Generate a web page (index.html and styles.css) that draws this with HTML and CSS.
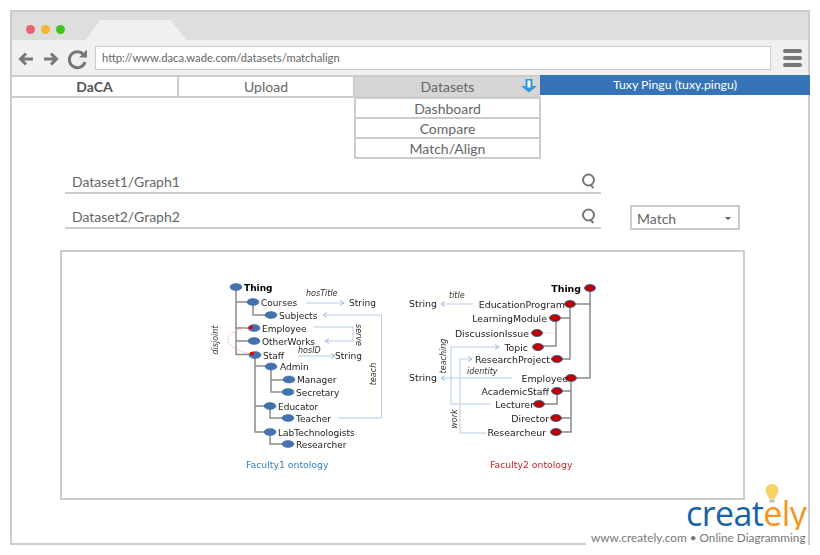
FILE: index.html
```html
<!DOCTYPE html>
<html lang="en">
<head>
  <meta charset="UTF-8" />
  <title>DaCA - Match/Align</title>
  <link rel="stylesheet" href="styles.css">
</head>
<body>
  <div class="window">
    <!-- Browser chrome -->
    <div class="titlebar">
      <span class="dot dot-red"></span>
      <span class="dot dot-yellow"></span>
      <span class="dot dot-green"></span>
      <span class="tab"></span>
    </div>
    <div class="toolbar">
      <svg class="tool-icons" width="72" height="24" viewBox="0 0 72 24">
        <path d="M16 12H4M9 6.500L3.500 12L9 17.500" class="tool-stroke" />
        <path d="M27 12H39.500M34 6.500L39.500 12L34 17.500" class="tool-stroke" />
        <path d="M66.500 7.500A8 8 0 1 0 68 15" class="tool-stroke" />
        <path d="M70 2.500V10.500H62Z" class="tool-fill" />
      </svg>
      <div class="url">http://www.daca.wade.com/datasets/matchalign</div>
      <div class="burger"><span></span><span></span><span></span></div>
    </div>

    <!-- Navigation -->
    <nav class="nav">
      <a class="nav-cell nav-brand">DaCA</a>
      <a class="nav-cell nav-upload">Upload</a>
      <div class="nav-cell nav-datasets">
        Datasets
        <svg class="down-arrow" width="18" height="14" viewBox="0 0 18 14">
          <path d="M5.500 0H12.500V7H17L9 13.500L1 7H5.500Z" fill="#2f96d9" />
          <rect x="7.500" y="1.500" width="3" height="7" fill="#fff" />
        </svg>
        <div class="menu">
          <a class="menu-item">Dashboard</a>
          <a class="menu-item">Compare</a>
          <a class="menu-item">Match/Align</a>
        </div>
      </div>
      <div class="nav-user">Tuxy Pingu (tuxy.pingu)</div>
    </nav>

    <!-- Search form -->
    <section class="form">
      <div class="field">
        <span>Dataset1/Graph1</span>
        <svg width="15" height="16" viewBox="0 0 15 16"><circle cx="7.500" cy="7" r="5.500" class="search" /><path d="M9.500 12L12.500 15" class="search" /></svg>
      </div>
      <div></div>
      <div class="field">
        <span>Dataset2/Graph2</span>
        <svg width="15" height="16" viewBox="0 0 15 16"><circle cx="7.500" cy="7" r="5.500" class="search" /><path d="M9.500 12L12.500 15" class="search" /></svg>
      </div>
      <div class="select"><span>Match</span><i class="caret"></i></div>
    </section>

    <!-- Ontology picture -->
    <section class="panel">
      <svg class="onto" width="681" height="246" viewBox="62 252 681 246">
        <defs>
          <marker id="head" markerWidth="6" markerHeight="6" refX="5" refY="3" orient="auto">
            <path d="M1 .5L5 3L1 5.500" fill="none" stroke="#9dbce0" stroke-width="1" />
          </marker>
        </defs>

        <g class="tree">
          <path d="M236 287V354.500H255M236 302H253M236 328H254M236 341H254" />
          <path d="M253 302V315H271" />
          <path d="M255 355V432H270M255 366H271M255 406H270" />
          <path d="M271 366V392H288M271 380H289" />
          <path d="M270 406V418H288" />
          <path d="M270 432V444H288" />
        </g>
        <g class="links">
          <path d="M306 303H344" marker-end="url(#head)" />
          <path d="M338 418H381.500V315H323" marker-end="url(#head)" />
          <path d="M313 327H353V341H325" marker-end="url(#head)" />
          <path d="M298 356H335" marker-end="url(#head)" />
        </g>
        <path class="arc" d="M251 327C218 331 222 349 252 354" />
        <g class="node-blue">
          <ellipse cx="236" cy="287" rx="6" ry="3.500" />
          <ellipse cx="253" cy="302" rx="6" ry="3.500" />
          <ellipse cx="271" cy="315" rx="6" ry="3.500" />
          <ellipse cx="254" cy="328" rx="6" ry="3.500" />
          <ellipse cx="254" cy="341" rx="6" ry="3.500" />
          <ellipse cx="255" cy="355" rx="6" ry="3.500" />
          <ellipse cx="271" cy="366.500" rx="6" ry="3.500" />
          <ellipse cx="289" cy="379.500" rx="6" ry="3.500" />
          <ellipse cx="288" cy="392" rx="6" ry="3.500" />
          <ellipse cx="270" cy="406" rx="6" ry="3.500" />
          <ellipse cx="288" cy="418" rx="6" ry="3.500" />
          <ellipse cx="270" cy="432" rx="6" ry="3.500" />
          <ellipse cx="288" cy="444" rx="6" ry="3.500" />
        </g>
        <rect x="249" y="326" width="4" height="3" fill="#e00" />
        <rect x="250" y="352" width="4" height="3" fill="#e00" />
        <g class="label">
          <text x="244" y="291" class="bold">Thing</text>
          <text x="261" y="306">Courses</text>
          <text x="279" y="319">Subjects</text>
          <text x="262" y="332">Employee</text>
          <text x="262" y="345">OtherWorks</text>
          <text x="263" y="359">Staff</text>
          <text x="280" y="370">Admin</text>
          <text x="297" y="383">Manager</text>
          <text x="296" y="396">Secretary</text>
          <text x="278" y="410">Educator</text>
          <text x="296" y="422">Teacher</text>
          <text x="278" y="436">LabTechnologists</text>
          <text x="296" y="448">Researcher</text>
          <text x="349" y="306">String</text>
          <text x="335" y="359">String</text>
        </g>
        <g class="note">
          <text x="306" y="296">hosTitle</text>
          <text x="298" y="353">hosID</text>
          <text transform="translate(218 340) rotate(-90)" text-anchor="middle">disjoint</text>
          <text transform="translate(356 335) rotate(90)" text-anchor="middle">serve</text>
          <text transform="translate(376 374) rotate(-90)" text-anchor="middle">teach</text>
        </g>
        <text x="246" y="468" class="caption caption-blue">Faculty1 ontology</text>

        <g class="tree">
          <path d="M590 288V378H571M590 304H570" />
          <path d="M570 304V359H557M570 318H555" />
          <path d="M556 318V346H538" />
          <path d="M571 378V432H556M571 391H557M571 418H556" />
          <path d="M557 391V404H539" />
        </g>
        <g class="links">
          <path d="M473 304H441" marker-end="url(#head)" />
          <path d="M490 404H451V347H499" marker-end="url(#head)" />
          <path d="M487 433H460V359H472" marker-end="url(#head)" />
          <path d="M512 378H441" marker-end="url(#head)" />
        </g>
        <path d="M543 333H555" stroke="#e8e8e8" />
        <g class="node-red">
          <ellipse cx="590" cy="288" rx="5.500" ry="3.500" />
          <ellipse cx="570" cy="304" rx="5.500" ry="3.500" />
          <ellipse cx="555" cy="318" rx="5.500" ry="3.500" />
          <ellipse cx="537" cy="333" rx="5.500" ry="3.500" />
          <ellipse cx="538" cy="347" rx="5.500" ry="3.500" />
          <ellipse cx="557" cy="359" rx="5.500" ry="3.500" />
          <ellipse cx="571" cy="378" rx="5.500" ry="3.500" />
          <ellipse cx="557" cy="391" rx="5.500" ry="3.500" />
          <ellipse cx="539" cy="404" rx="5.500" ry="3.500" />
          <ellipse cx="556" cy="418" rx="5.500" ry="3.500" />
          <ellipse cx="556" cy="432" rx="5.500" ry="3.500" />
        </g>
        <g class="label label-end">
          <text x="581" y="292" class="bold">Thing</text>
          <text x="565" y="308">EducationProgram</text>
          <text x="547" y="322">LearningModule</text>
          <text x="529" y="337">DiscussionIssue</text>
          <text x="528" y="351">Topic</text>
          <text x="550" y="363">ResearchProject</text>
          <text x="568" y="382">Employee</text>
          <text x="549" y="395">AcademicStaff</text>
          <text x="534" y="408">Lecturer</text>
          <text x="549" y="422">Director</text>
          <text x="546" y="436">Researcheur</text>
          <text x="437" y="307">String</text>
          <text x="437" y="381">String</text>
        </g>
        <g class="note">
          <text x="449" y="298">title</text>
          <text x="467" y="374">identity</text>
          <text transform="translate(446 356) rotate(-90)" text-anchor="middle">teaching</text>
          <text transform="translate(457 419) rotate(-90)" text-anchor="middle">work</text>
        </g>
        <text x="490" y="468" class="caption caption-red">Faculty2 ontology</text>
      </svg>
    </section>
  </div>

  <!-- Watermark -->
  <div class="brand">
    <svg class="bulb" width="14" height="20" viewBox="0 0 14 20">
      <path d="M7 0C3 0 .5 3 .5 6.500C.5 10 3.500 11.500 4 15H10C10.500 11.500 13.500 10 13.500 6.500C13.500 3 11 0 7 0Z" fill="#f8d264" />
      <rect x="4.500" y="15.500" width="5" height="3" fill="#bbb" />
    </svg>
    <div class="logo">creat<span class="logo-end">ely</span></div>
    <div class="tagline">www.creately.com • Online Diagramming</div>
  </div>
</body>
</html>
```

FILE: styles.css
```css
* {
  box-sizing: border-box;
}
body {
  font-family: 'Lato', sans-serif;
  margin: 0;
  padding: 10px;
  background: white;
  color: #666;
}
.window {
  width: 800px;
  height: 535px;
  border: 2px solid #ccc;
}

/* browser chrome */
.titlebar {
  display: flex;
  align-items: center;
  gap: 6px;
  height: 28px;
  padding: 7px 0 0 14px;
  background: #dddfdc;
}
.dot {
  width: 9px;
  height: 9px;
  border-radius: 50%;
}
.dot-red { background: #ef5f73; }
.dot-yellow { background: #f0b732; }
.dot-green { background: #3cc31e; }
.tab {
  align-self: flex-end;
  width: 100px;
  height: 20px;
  margin-left: 15px;
  background: #f0f0f0;
  clip-path: polygon(14px 0, 85px 0, 100% 100%, 0 100%);
}
.toolbar {
  display: flex;
  align-items: center;
  height: 35px;
  padding: 0 6px 0 5px;
  background: #f0f0f0;
}
.tool-stroke {
  fill: none;
  stroke: #777;
  stroke-width: 3;
}
.tool-fill {
  fill: #777;
}
.tool-icons {
  margin: 3px 0 0;
}
.url {
  flex: 1;
  height: 24px;
  margin: 0 12px 0 6px;
  padding: 0 6px;
  border: 1px solid #ccc;
  background: white;
  font-size: 11.200px;
  line-height: 21px;
  color: #666;
}
.burger {
  display: flex;
  flex-direction: column;
  gap: 3px;
  width: 19px;
}
.burger span {
  height: 4px;
  border-radius: 2px;
  background: #777;
}

/* nav */
.nav {
  display: flex;
  height: 23px;
  font-size: 14px;
}
.nav-cell {
  position: relative;
  height: 23px;
  border-top: 2px solid #ccc;
  border-bottom: 2px solid #ccc;
  text-align: center;
  line-height: 19px;
}
.nav-brand {
  width: 167px;
  border-right: 2px solid #ccc;
  font-weight: 700;
  color: #555;
}
.nav-upload {
  width: 176px;
  border-right: 2px solid #ccc;
}
.nav-datasets {
  width: 185px;
  background: #d6d6d6;
}
.down-arrow {
  position: absolute;
  top: 2px;
  right: 2px;
}
.menu {
  position: absolute;
  top: 20px;
  left: -1px;
  width: 187px;
  border: 2px solid #ccc;
  border-bottom: 0;
  background: white;
}
.menu-item {
  display: block;
  height: 20px;
  border-bottom: 2px solid #ccc;
  line-height: 19px;
}
.nav-user {
  flex: 1;
  height: 20px;
  margin-right: -2px;
  background: #3674b7;
  color: white;
  font-size: 12.300px;
  line-height: 19px;
  text-align: center;
}

/* form */
.form {
  display: grid;
  grid-template-columns: 536px 110px;
  grid-template-rows: 24px 25px;
  column-gap: 29px;
  row-gap: 11px;
  margin: 72px 0 0 53px;
}
.field {
  display: flex;
  justify-content: space-between;
  align-items: center;
  height: 24px;
  padding: 0 5px 0 7px;
  border-bottom: 2px solid #ccc;
  font-size: 14px;
}
.search {
  fill: none;
  stroke: #777;
  stroke-width: 2;
}
.select {
  display: flex;
  justify-content: space-between;
  align-items: center;
  padding: 1px 7px 0 5px;
  border: 2px solid #ccc;
  font-size: 14px;
}
.caret {
  width: 0;
  height: 0;
  border-left: 3px solid transparent;
  border-right: 3px solid transparent;
  border-top: 3px solid #555;
}

/* ontology picture */
.panel {
  width: 685px;
  height: 250px;
  margin: 20px 0 0 48px;
  border: 2px solid #ccc;
}
.onto {
  display: block;
  filter: blur(.5px);
}
.tree path {
  fill: none;
  stroke: #8a8a8a;
  stroke-width: 1.500;
}
.links path {
  fill: none;
  stroke: #b5cde8;
}
.arc {
  fill: none;
  stroke: #f5b5b5;
  stroke-dasharray: 2 1;
}
.node-blue {
  fill: #4472b0;
  stroke: #3a659b;
  stroke-width: .5;
}
.node-red {
  fill: #c00000;
  stroke: #3a659b;
  stroke-width: 1;
}
.label {
  font-family: 'DejaVu Sans', sans-serif;
  font-size: 9px;
  fill: #222;
}
.label-end {
  text-anchor: end;
  font-size: 9.400px;
}
.bold {
  font-weight: 700;
  fill: #000;
}
.note {
  font-family: 'DejaVu Sans', sans-serif;
  font-style: italic;
  font-size: 8px;
  fill: #333;
}
.caption {
  font-family: 'DejaVu Sans', sans-serif;
  font-size: 9.300px;
}
.caption-blue { fill: #2e84c6; }
.caption-red { fill: #d3212b; }

/* watermark */
.brand {
  position: absolute;
  top: 484px;
  left: 586px;
  width: 234px;
  height: 71px;
}
.bulb {
  position: absolute;
  top: 0;
  left: 179px;
}
.logo {
  position: absolute;
  top: 14px;
  left: 100px;
  font-family: 'Open Sans', sans-serif;
  font-weight: 500;
  font-size: 34px;
  letter-spacing: -.6px;
  line-height: 30px;
  color: #1a62a8;
}
.logo-end {
  color: #f7941d;
}
.tagline {
  position: absolute;
  top: 46px;
  left: 0;
  width: 222px;
  height: 15px;
  padding-left: 5px;
  background: white;
  font-size: 11.800px;
  line-height: 16px;
  color: #777;
  white-space: nowrap;
}
```
